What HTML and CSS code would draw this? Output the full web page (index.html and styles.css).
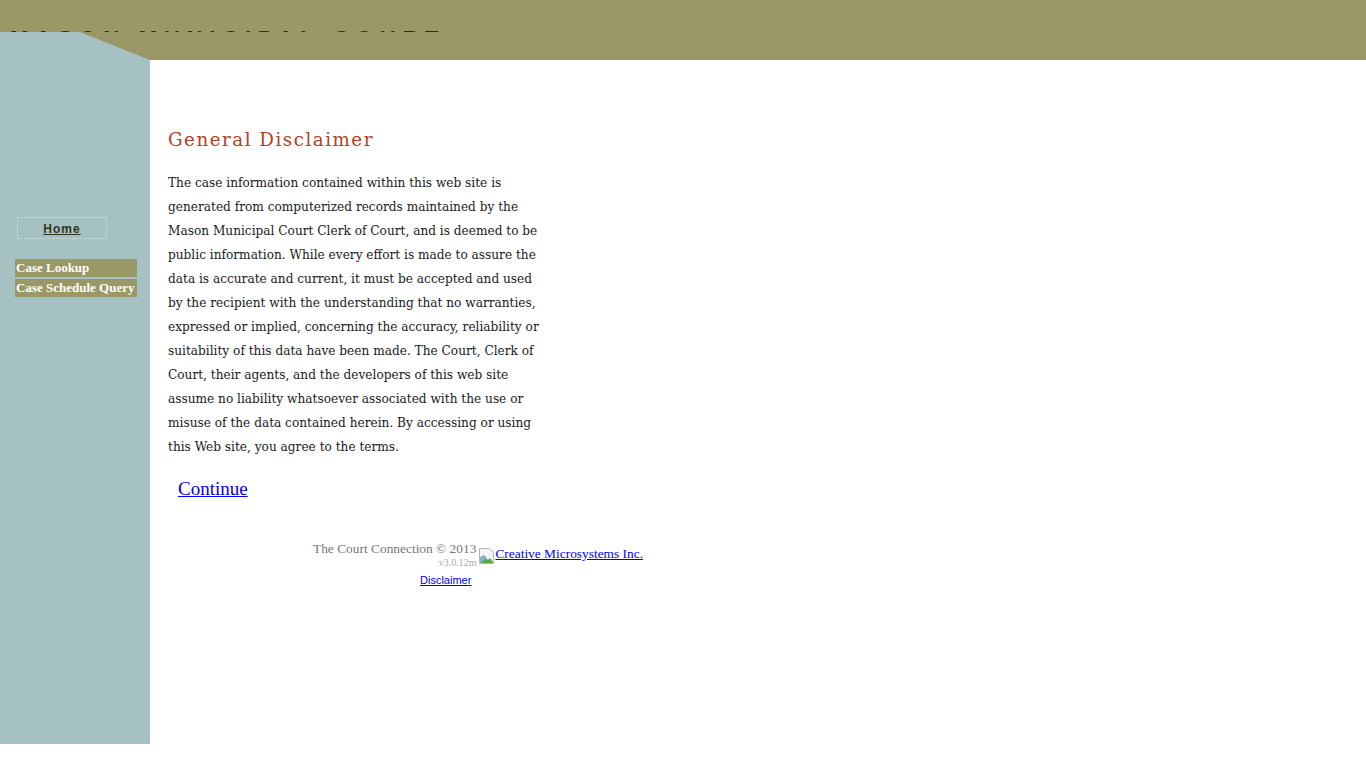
FILE: index.html
```html
<!DOCTYPE html>
<html lang="en">
<head>
    <meta charset="UTF-8">
    <title>Mason Municipal Court - General Disclaimer</title>
    <link rel="stylesheet" href="styles.css">
</head>
<body>
    <div class="banner">
        <div class="banner-title"><span>Mason Municipal Court</span></div>
    </div>

    <div class="page">
        <div class="sidebar">
            <div class="home-box"><a href="#">Home</a></div>
            <div class="menu">
                <a href="#">Case Lookup</a>
                <a href="#">Case Schedule Query</a>
            </div>
        </div>

        <div class="main">
            <h1 class="title">General Disclaimer</h1>
            <p class="disclaimer">
                The case information contained within this web site is generated from computerized records
                maintained by the Mason Municipal Court Clerk of Court, and is deemed to be public information.
                While every effort is made to assure the data is accurate and current, it must be accepted and
                used by the recipient with the understanding that no warranties, expressed or implied, concerning
                the accuracy, reliability or suitability of this data have been made. The Court, Clerk of Court,
                their agents, and the developers of this web site assume no liability whatsoever associated with
                the use or misuse of the data contained herein. By accessing or using this Web site, you agree
                to the terms.
            </p>
            <a class="continue" href="#">Continue</a>

            <div class="footer">
                <div class="footer-row">
                    <div class="copyright">
                        <div>The Court Connection &copy; 2013</div>
                        <div class="version">v3.0.12m</div>
                    </div>
                    <a class="vendor" href="#">
                        <svg class="broken-img" width="16" height="16" viewBox="0 0 16 16">
                            <path d="M0.5 0.5h10l4 4v11h-14z" fill="#f4f4f4" stroke="#b5b5b5"/>
                            <path d="M1 15l5-6 3 3 2-2 3.5 5z" fill="#5aa84a"/>
                            <path d="M1 9l4-2 3 3-7 5z" fill="#7fb0d8"/>
                        </svg>Creative Microsystems Inc.</a>
                </div>
                <div class="footer-links"><a href="#">Disclaimer</a></div>
            </div>
        </div>
    </div>
</body>
</html>
```

FILE: styles.css
```css
body {
    margin: 0;
    font-family: "Liberation Serif", serif;
    background-color: #fff;
}
.banner {
    height: 60px;
    background-color: #9a9866;
}
.banner-title {
    height: 32px;
    overflow: hidden;
    display: flex;
    align-items: flex-end;
    padding-left: 10px;
}
.banner-title span {
    font-family: "Liberation Sans", sans-serif;
    font-weight: bold;
    font-size: 22px;
    line-height: 20px;
    letter-spacing: 6.8px;
    text-transform: uppercase;
    color: #2e2e16;
    margin-bottom: -17px;
}
.page {
    display: flex;
    margin-top: -28px;
}
.sidebar {
    width: 150px;
    height: 712px;
    flex-shrink: 0;
    background-color: #a5c1c2;
    clip-path: polygon(0 0, 80px 0, 150px 28px, 150px 100%, 0 100%);
    padding-top: 185px;
    box-sizing: border-box;
}
.home-box {
    margin-left: 17px;
    width: 88px;
    height: 20px;
    border: 1px dotted #d4dede;
    text-align: center;
    line-height: 20px;
}
.home-box a {
    font-family: "Liberation Sans", sans-serif;
    font-weight: bold;
    font-size: 12px;
    letter-spacing: 1px;
    color: #33331a;
}
.menu {
    margin-top: 20px;
    margin-left: 15px;
    width: 122px;
    display: flex;
    flex-direction: column;
    gap: 2px;
}
.menu a {
    display: block;
    height: 18px;
    line-height: 17px;
    padding-left: 1px;
    background-color: #9a9866;
    color: #fff;
    font-weight: bold;
    font-size: 13px;
    text-decoration: none;
    white-space: nowrap;
}
.main {
    padding-left: 18px;
    padding-top: 96px;
}
.title {
    margin: 0;
    font-family: "DejaVu Serif", serif;
    font-weight: normal;
    font-size: 18.3px;
    line-height: 24px;
    letter-spacing: 1.5px;
    color: #b5401d;
}
.disclaimer {
    margin: 18px 0 0;
    width: 372px;
    font-family: "DejaVu Serif Condensed", "DejaVu Serif", serif;
    font-stretch: condensed;
    font-size: 13.5px;
    line-height: 24px;
    color: #1a1a1a;
}
.continue {
    display: inline-block;
    margin: 20px 0 0 10px;
    font-size: 19px;
    color: #0000ee;
}
.footer {
    margin-top: 42px;
    margin-left: 145px;
}
.footer-row {
    display: flex;
    align-items: flex-start;
}
.copyright {
    text-align: right;
    color: #777;
    font-size: 13.4px;
    line-height: 14px;
}
.version {
    font-size: 10px;
    color: #aaa;
}
.vendor {
    margin-left: 3px;
    margin-top: 4px;
    font-size: 13.4px;
    color: #0000ee;
    display: flex;
    align-items: flex-end;
}
.broken-img {
    margin-bottom: -2px;
}
.footer-links {
    margin-top: 0;
    margin-left: 107px;
}
.footer-links a {
    font-family: "Liberation Sans", sans-serif;
    font-size: 11px;
    color: #0000ee;
}
```
